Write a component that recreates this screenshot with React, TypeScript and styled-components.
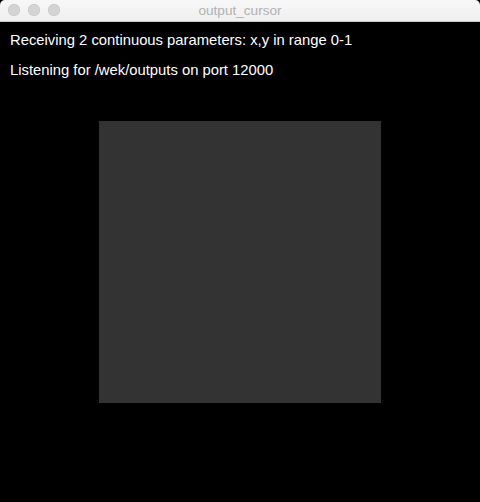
import React from 'react';
import styled, { createGlobalStyle } from 'styled-components';

const Global = createGlobalStyle`
    html, body {
        margin: 0;
        padding: 0;
        background: #000;
    }
`;

const Window = styled.div`
    width: 480px;
    height: 502px;
    display: flex;
    flex-direction: column;
    background: #000;
    overflow: hidden;
`;

const TitleBar = styled.div`
    position: relative;
    height: 21px;
    flex-shrink: 0;
    display: flex;
    align-items: center;
    justify-content: center;
    background: linear-gradient(#f7f7f7, #efefef);
    border-bottom: 1px solid #c8c8c8;
    border-radius: 5px 5px 0 0;
`;

const Lights = styled.div`
    position: absolute;
    left: 8px;
    top: 4px;
    display: flex;
    gap: 8px;
`;

const Light = styled.span`
    width: 12px;
    height: 12px;
    border-radius: 50%;
    background: #d4d4d4;
    box-shadow: inset 0 0 0 0.5px #c4c4c4;
`;

const Title = styled.span`
    font-family: 'Liberation Sans', Arial, sans-serif;
    font-size: 13.6px;
    color: #b1b1b1;
`;

const Canvas = styled.div`
    flex: 1;
    display: flex;
    flex-direction: column;
    padding: 10px 10px 0 10px;
    font-family: 'Liberation Sans', Arial, sans-serif;
    font-size: 14.8px;
    color: #fff;
`;

const Line = styled.div`
    line-height: 16px;
    height: 16px;
    margin-bottom: 14px;
`;

const Stage = styled.div`
    display: flex;
    justify-content: center;
    padding-top: 29px;
`;

const Square = styled.div`
    width: 282px;
    height: 282px;
    background: #333333;
`;

export default function App() {
    return (
        <Window>
            <Global />
            <TitleBar>
                <Lights>
                    <Light />
                    <Light />
                    <Light />
                </Lights>
                <Title>output_cursor</Title>
            </TitleBar>
            <Canvas>
                <Line>Receiving 2 continuous parameters: x,y in range 0-1</Line>
                <Line>Listening for /wek/outputs on port 12000</Line>
                <Stage>
                    <Square />
                </Stage>
            </Canvas>
        </Window>
    );
}
